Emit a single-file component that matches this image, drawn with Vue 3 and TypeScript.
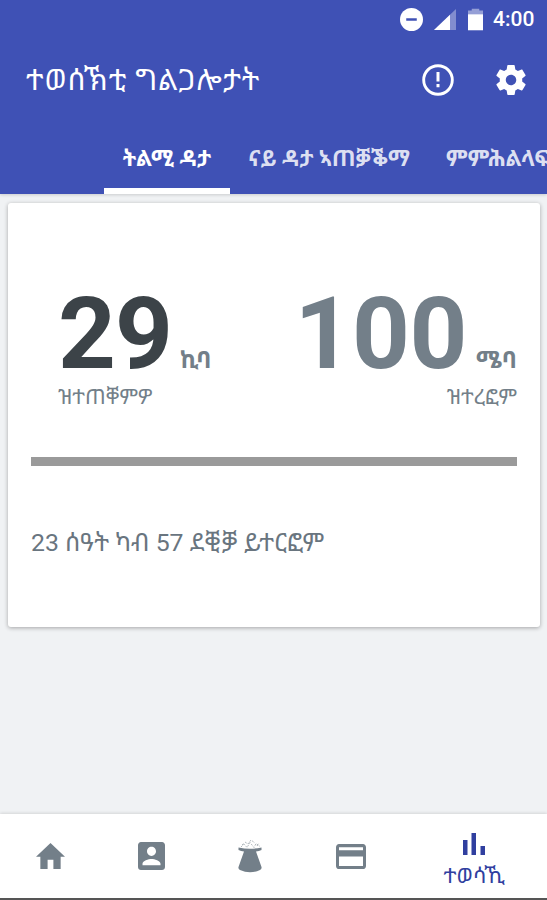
<script setup lang="ts">
import { ref } from 'vue'

interface Tab { id: string; label: string }

const tabs: Tab[] = [
  { id: 'plan', label: 'ትልሚ ዳታ' },
  { id: 'usage', label: 'ናይ ዳታ ኣጠቓቕማ' },
  { id: 'transfer', label: 'ምምሕልላፍ' },
]
const activeTab = ref('plan')
</script>

<template>
  <main class="screen">
    <header class="top">
      <div class="status">
        <svg class="dnd" viewBox="0 0 24 24"><circle cx="12" cy="12" r="12" fill="#fff" /><path d="M6.5 12h11" stroke="#3f51b5" stroke-width="2.6" /></svg>
        <svg class="signal" viewBox="0 0 22 21"><path d="M22 0v21H0z" fill="#fff" opacity=".35" /><path d="M16 5.7V21H0z" fill="#fff" /></svg>
        <svg class="battery" viewBox="0 0 16 23"><path d="M4 2V0h8v2h4v5H0V2z" fill="#fff" opacity=".45" /><path d="M0 6h16v17H0z" fill="#fff" /></svg>
        <span class="clock">4:00</span>
      </div>
      <div class="bar">
        <h1 class="title">ተወሰኽቲ ግልጋሎታት</h1>
        <svg class="info" viewBox="0 0 32 32" fill="none" stroke="#fff"><circle cx="16" cy="16" r="14.3" stroke-width="2.9" /><path d="M16 8v9.500M16 20v3.200" stroke-width="3" /></svg>
        <svg class="gear" viewBox="2 2 20 20"><path fill="#fff" d="M19.43 12.98c.04-.32.07-.64.07-.98s-.03-.66-.07-.98l2.11-1.65c.19-.15.24-.42.12-.64l-2-3.46c-.12-.22-.39-.3-.61-.22l-2.49 1c-.52-.4-1.08-.73-1.69-.98l-.38-2.65C14.46 2.18 14.25 2 14 2h-4c-.25 0-.46.18-.49.42l-.38 2.65c-.61.25-1.17.59-1.69.98l-2.49-1c-.23-.09-.49 0-.61.22l-2 3.46c-.13.22-.07.49.12.64l2.11 1.65c-.04.32-.07.65-.07.98s.03.66.07.98l-2.11 1.65c-.19.15-.24.42-.12.64l2 3.46c.12.22.39.3.61.22l2.49-1c.52.4 1.08.73 1.69.98l.38 2.65c.03.24.24.42.49.42h4c.25 0 .46-.18.49-.42l.38-2.65c.61-.25 1.17-.59 1.69-.98l2.49 1c.23.09.49 0 .61-.22l2-3.46c.12-.22.07-.49-.12-.64l-2.11-1.65zM12 15.5c-1.93 0-3.5-1.57-3.5-3.5s1.57-3.5 3.5-3.5 3.5 1.57 3.5 3.5-1.57 3.5-3.5 3.5z" /></svg>
      </div>
      <nav class="tabs">
        <button v-for="t in tabs" :key="t.id" class="tab" :class="[t.id, { active: t.id === activeTab }]" @click="activeTab = t.id">{{ t.label }}</button>
      </nav>
    </header>

    <section class="content">
      <article class="card">
        <div class="stats">
          <div class="stat used">
            <div class="amount"><span class="num">29</span><span class="unit">ኪባ</span></div>
            <div class="caption">ዝተጠቐምዎ</div>
          </div>
          <div class="stat left">
            <div class="amount"><span class="num">100</span><span class="unit">ሜባ</span></div>
            <div class="caption">ዝተረፎም</div>
          </div>
        </div>
        <div class="progress"></div>
        <p class="remaining">23 ሰዓት ካብ 57 ደቒቓ ይተርፎም</p>
      </article>
    </section>

    <nav class="bottom">
      <a class="item"><svg width="29" height="26" viewBox="2 3 20 17" preserveAspectRatio="none"><path d="M10 20v-6h4v6h5v-8h3L12 3 2 12h3v8z" /></svg></a>
      <a class="item"><svg width="27" height="28" viewBox="3 3 18 18" preserveAspectRatio="none"><path d="M3 5v14c0 1.1.89 2 2 2h14c1.1 0 2-.9 2-2V5c0-1.1-.9-2-2-2H5c-1.11 0-2 .9-2 2zm12 4c0 1.66-1.34 3-3 3s-3-1.34-3-3 1.34-3 3-3 3 1.34 3 3zm-9 8c0-2 4-3.1 6-3.1s6 1.1 6 3.1v1H6v-1z" /></svg></a>
      <a class="item hat">
        <svg width="26" height="34" viewBox="0 0 26 34">
          <path d="M1.500 8.500Q13 11 24.500 8.500V11Q22 12.300 19 12.500L24.500 28Q25 30 23 31 13 35.500 3 31 1 30 1.500 28L7 12.500Q4 12.300 1.500 11z" />
          <path d="M4 8l3-3 3 3.500 3-5 4 5 2-4 4 3M8 3l3 2 3-4 4 3M5 6l2-2M20 7l2-3" fill="none" stroke="#75818b" stroke-width="1" stroke-dasharray="2 1.300" opacity=".55" />
        </svg>
      </a>
      <a class="item"><svg width="30" height="25" viewBox="2 4 20 16" preserveAspectRatio="none"><path d="M20 4H4c-1.110 0-1.990.89-1.990 2L2 18c0 1.110.89 2 2 2h16c1.110 0 2-.89 2-2V6c0-1.110-.89-2-2-2zm0 14H4v-6h16v6zm0-10H4V6h16v2z" /></svg></a>
      <a class="item current">
        <svg width="22" height="22" viewBox="0 0 22 22"><path d="M0 7h4.500v15H0zM8.500 0H13v22H8.500zM17.500 13H22v9h-4.500z" /></svg>
        <span class="label">ተወሳኺ</span>
      </a>
    </nav>
  </main>
</template>

<style>
body { margin: 0; background: #f0f2f4; }
</style>

<style scoped>
.screen { width: 547px; height: 900px; display: flex; flex-direction: column; overflow: hidden; background: #f0f2f4; font-family: Roboto, "Noto Sans Ethiopic", "Noto Sans", sans-serif; box-sizing: border-box; border-bottom: 2px solid #555; }
.top { height: 194px; flex: none; background: #3f51b5; color: #fff; display: flex; flex-direction: column; box-shadow: 0 1px 3px rgba(0, 0, 0, .16); }
.status { height: 39px; display: flex; justify-content: flex-end; align-items: center; padding-right: 12px; }
.dnd { width: 23px; height: 23px; margin-right: 11px; }
.signal { width: 22px; height: 21px; margin-right: 12px; }
.battery { width: 15px; height: 23px; margin-right: 10px; }
.clock { font-size: 21px; font-weight: 500; line-height: 39px; width: 42px; white-space: nowrap; }
.bar { height: 81px; display: flex; align-items: center; padding: 0 21px 0 26px; }
.title { margin: 0; flex: 1; font-size: 29.200px; letter-spacing: .95px; font-weight: 400; line-height: 80px; height: 80px; white-space: nowrap; }
.info { width: 32px; height: 32px; margin-right: 42px; }
.gear { width: 30px; height: 30px; }
.tabs { height: 74px; display: flex; padding-left: 104px; }
.tab { flex: none; box-sizing: border-box; height: 74px; padding: 9px 0 0; border: 0; border-bottom: 6px solid transparent; background: none; color: #dcdff1; font: 700 22px/59px Roboto, "Noto Sans Ethiopic", "Noto Sans", sans-serif; white-space: nowrap; }
.tab.plan { width: 126px; margin-right: 18px; }
.tab.usage { width: 162px; margin-right: 36px; font-size: 21.800px; }
.tab.active { color: #fff; border-bottom-color: #fff; }
.content { flex: 1; padding: 9px 7px 0 8px; }
.card { height: 424px; box-sizing: border-box; padding: 84px 23px 0; background: #fff; border-radius: 3px; box-shadow: 0 1px 4px rgba(0, 0, 0, .32); }
.stats { display: flex; justify-content: space-between; height: 170px; }
.stat { color: #737f89; }
.used { padding-left: 27px; }
.amount { display: flex; align-items: baseline; height: 94px; white-space: nowrap; }
.num { font-size: 101px; line-height: 94px; font-weight: 700; letter-spacing: -.5px; }
.used .num { color: #3c4348; letter-spacing: -1px; }
.unit { font-size: 23.5px; line-height: 24px; font-weight: 700; margin-left: 8px; }
.left .unit { margin-left: 9px; }
.caption { height: 32px; line-height: 32px; font-size: 21.2px; white-space: nowrap; }
.left .caption { text-align: right; }
.left .amount { justify-content: flex-end; }
.progress { height: 9px; background: #9a9a9a; }
.remaining { margin: 59px 0 0; height: 36px; line-height: 36px; font-size: 24.800px; color: #69757f; white-space: nowrap; }
.bottom { height: 84px; flex: none; display: flex; background: #fff; box-shadow: 0 -1px 3px rgba(0, 0, 0, .12); }
.item { width: 101px; display: flex; flex-direction: column; align-items: center; justify-content: center; fill: #737f89; }
.hat { width: 97px; padding-right: 2px; }
.current { width: 146px; fill: #303f9f; color: #303f9f; justify-content: flex-start; padding-top: 19px; box-sizing: border-box; }
.label { height: 30px; line-height: 42px; font-size: 21.700px; white-space: nowrap; }
</style>
